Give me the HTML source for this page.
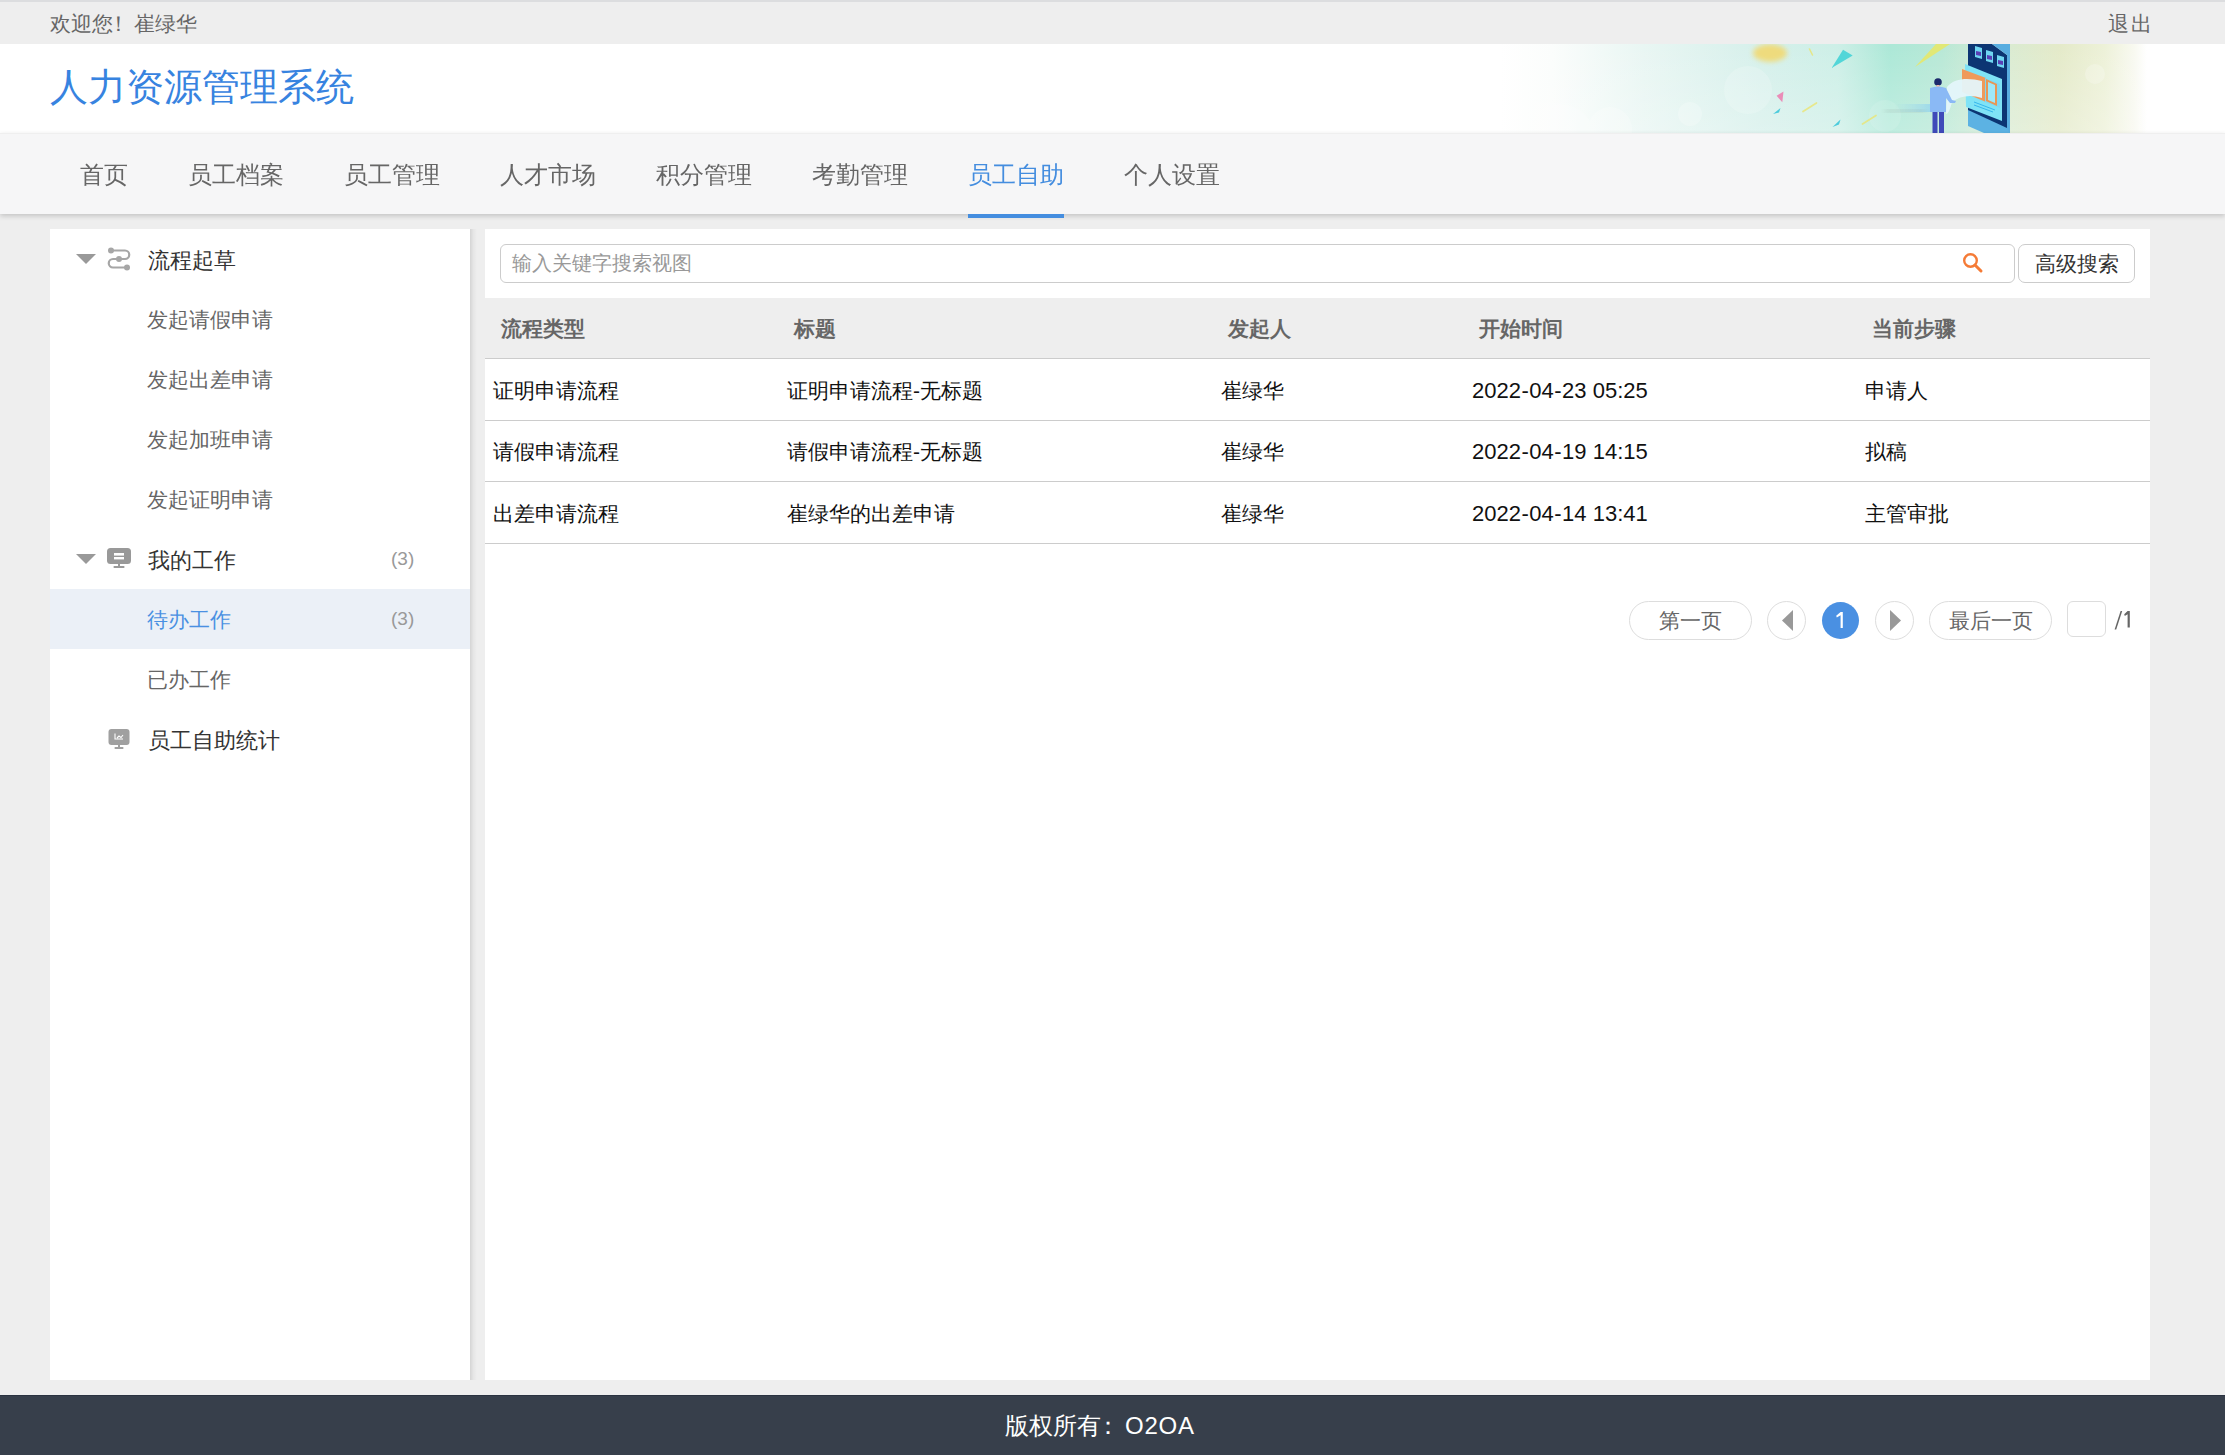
<!DOCTYPE html>
<html><head><meta charset="utf-8">
<style>
*{box-sizing:border-box;margin:0;padding:0}
html,body{width:2225px;height:1455px;overflow:hidden;background:#eeeeee;font-family:"Liberation Sans",sans-serif;position:relative}
.abs{position:absolute}
#topline{left:0;top:0;width:2225px;height:2px;background:#dcdddf}
#topbar{left:0;top:2px;width:2225px;height:42px;background:#eeeeee;color:#666;font-size:21px}
#welcome{left:50px;top:2px;line-height:40px;white-space:nowrap}
#logout{left:2108px;top:2px;line-height:40px;white-space:nowrap;letter-spacing:2px}
#header{left:0;top:44px;width:2225px;height:89px;background:#fff}
#title{left:50px;top:-1px;line-height:88px;font-size:38px;font-weight:500;color:#3783e0;white-space:nowrap}
#banner{left:1500px;top:0;width:650px;height:89px;overflow:hidden}
#nav{left:0;top:133px;width:2225px;height:81px;background:#f6f6f7;border-top:1px solid #efefef;box-shadow:0 2px 5px rgba(0,0,0,0.18)}
.nv{position:absolute;top:1px;height:79px;line-height:79px;font-size:24px;color:#666;white-space:nowrap}
.nv.on{color:#448ddf}
.nv.on:after{content:"";position:absolute;left:0;right:0;top:79px;height:4px;background:#448ddf}
#side{left:50px;top:229px;width:420px;height:1151px;background:#fff}
#sideshadow{left:470px;top:229px;width:7px;height:1151px;background:linear-gradient(to right,rgba(0,0,0,0.11),rgba(0,0,0,0.04) 45%,rgba(0,0,0,0))}
.row{position:absolute;left:0;width:420px;height:60px;line-height:60px;white-space:nowrap}
.row .t{position:absolute;left:97px;top:0}
.row.p .t{font-size:22px;color:#333;top:2px;left:98px}
.row.c .t{font-size:21px;color:#666;top:1px}
.row.sel{background:#ebf0f7}
.row.sel .t{color:#4a90e2}
.cnt{position:absolute;left:341px;top:0;font-size:19px;color:#999}
.tri{position:absolute;left:26px;width:0;height:0;border-left:10px solid transparent;border-right:10px solid transparent;border-top:10px solid #999}
#main{left:485px;top:229px;width:1665px;height:1151px;background:#fff}
#search{left:15px;top:15px;width:1515px;height:39px;border:1px solid #ccc;border-radius:6px}
#ph{position:absolute;left:11px;top:0;line-height:37px;font-size:20px;color:#999;white-space:nowrap}
#adv{left:1533px;top:15px;width:117px;height:39px;border:1px solid #ccc;border-radius:7px;font-size:21px;color:#333;line-height:37px;text-align:center;white-space:nowrap}
#thead{left:0;top:69px;width:1665px;height:61px;background:#eeeeee;border-bottom:1px solid #ccc}
.th{position:absolute;top:1px;line-height:60px;font-size:21px;font-weight:bold;color:#666;white-space:nowrap}
.tr{position:absolute;left:0;width:1665px;border-bottom:1px solid #ccc}
.td{position:absolute;top:1px;font-size:21px;color:#111;white-space:nowrap}
.td.d{font-size:22px}
.pill{position:absolute;top:372px;height:39px;border:1px solid #ddd;border-radius:20px;font-size:21px;color:#666;text-align:center;line-height:37px;white-space:nowrap}
#footer{left:0;top:1395px;width:2225px;height:60px;background:#373f4b;color:#fff;font-size:24px;line-height:60px;border-top:1px solid #2a3240}
#footer span{position:absolute;top:0;white-space:nowrap}
</style></head><body>
<div id="topline" class="abs"></div>
<div id="topbar" class="abs">
  <div id="welcome" class="abs">欢迎您<span style="position:relative;left:-5px">！</span>崔绿华</div>
  <div id="logout" class="abs">退出</div>
</div>
<div id="header" class="abs">
  <div id="title" class="abs">人力资源管理系统</div>
  <div id="banner" class="abs"><svg width="650" height="89" viewBox="0 0 650 89">
<defs>
<linearGradient id="bg" x1="0" y1="0" x2="1" y2="0">
<stop offset="0" stop-color="#ffffff"/>
<stop offset="0.08" stop-color="#fbfdfc"/>
<stop offset="0.22" stop-color="#e9f6f3"/>
<stop offset="0.40" stop-color="#d6f0eb"/>
<stop offset="0.52" stop-color="#cdefe7"/>
<stop offset="0.60" stop-color="#ace8d7"/>
<stop offset="0.68" stop-color="#b8e8d6"/>
<stop offset="0.77" stop-color="#d8ebd3"/>
<stop offset="0.86" stop-color="#e4eac9"/>
<stop offset="0.93" stop-color="#edf1d8"/>
<stop offset="0.975" stop-color="#f8f9f0"/>
<stop offset="0.995" stop-color="#ffffff"/>
<stop offset="1" stop-color="#ffffff"/>
</linearGradient>
<linearGradient id="vg" x1="0" y1="0" x2="0" y2="1">
<stop offset="0" stop-color="#ffffff" stop-opacity="0"/>
<stop offset="1" stop-color="#ffffff" stop-opacity="0.25"/>
</linearGradient>
<filter id="b2" x="-50%" y="-50%" width="200%" height="200%"><feGaussianBlur stdDeviation="2.5"/></filter>
<filter id="b1" x="-50%" y="-50%" width="200%" height="200%"><feGaussianBlur stdDeviation="0.6"/></filter>
<linearGradient id="streak" x1="0" y1="0" x2="1" y2="0">
<stop offset="0" stop-color="#9fd8ee" stop-opacity="0"/>
<stop offset="1" stop-color="#8fd3ee" stop-opacity="0.8"/>
</linearGradient>
</defs>
<rect width="650" height="89" fill="url(#bg)"/>
<rect width="650" height="89" fill="url(#vg)"/>
<g fill="#ffffff" opacity="0.22">
<circle cx="60" cy="95" r="35"/>
<circle cx="110" cy="85" r="22"/>
<circle cx="190" cy="70" r="12"/>
<circle cx="385" cy="72" r="16" opacity="0.5"/>
<circle cx="595" cy="30" r="10"/>
</g>
<ellipse cx="270" cy="9" rx="17" ry="9" fill="#f3d86a" filter="url(#b2)" opacity="0.85"/>
<polygon points="331.6,24 343,5.7 352.7,11.4" fill="#52d6d8"/>
<polygon points="276.6,51.8 283.5,47.4 282.3,58.3" fill="#ea8db8"/>
<polygon points="273,70 280.5,64 279,68.5" fill="#4ccbdc"/>
<polygon points="332.5,83 340.5,75.5 339,80.5" fill="#4ccbdc"/>
<path d="M303,67.5 L316.5,59" stroke="#ece46c" stroke-width="1.7" stroke-linecap="round" opacity="0.75"/>
<path d="M309.5,5 L312.5,11" stroke="#ece46c" stroke-width="1.6" stroke-linecap="round" opacity="0.75"/>
<path d="M362.5,80 L376,71.5" stroke="#ece46c" stroke-width="1.7" stroke-linecap="round" opacity="0.75"/>
<polygon points="415,23 450,0 436,0" fill="#e6e86c" opacity="0.9"/>
<circle cx="248" cy="46" r="24" fill="#ffffff" opacity="0.18"/>
<rect x="395" y="60" width="40" height="8" fill="url(#streak)" filter="url(#b1)"/>
<rect x="385" y="66" width="40" height="2" fill="#777" opacity="0.3" filter="url(#b2)"/>
<!-- device -->
<polygon points="468,0 492,0 507,11 507,86 468,68" fill="#0c3573"/>
<polygon points="492,0 510,0 510,89 507,89 507,11" fill="#58ade0"/>
<polygon points="468,66 507,84 510,89 484,89 468,82" fill="#5cb2e3"/>
<polygon points="475,2 482,4 482,15 475,13" fill="#6fd6f2"/><polygon points="476,7 481,8 481,12 476,11" fill="#5a3fb5"/>
<polygon points="486,6 493,8 493,19 486,17" fill="#6fd6f2"/><polygon points="487,11 492,12 492,16 487,15" fill="#5a3fb5"/>
<polygon points="497,11 504,13 504,24 497,22" fill="#6fd6f2"/><polygon points="498,16 503,17 503,21 498,20" fill="#5a3fb5"/>
<polygon points="465,20 502,35 502,77 466,63" fill="#7fe3f6"/>
<polygon points="462,25 486,34 486,58 462,48" fill="#ef9a5a"/>
<polygon points="485,34 500,40 500,64 485,58" fill="#7fd8f2"/>
<polygon points="486,35 497,40 497,62 486,57" fill="#e89654"/>
<polygon points="488,38 495,41 495,59 488,56" fill="#9fe8f8"/>
<path d="M474,58 L495,66 M474,61 L493,68" stroke="#36b6ec" stroke-width="1"/>
<!-- paper -->
<path d="M447,43 C455,33 470,34 482,37 L482,54 C470,50 460,52 452,58 C450,66 448,70 446,70 Z" fill="#e4f6fb" opacity="0.95"/>
<!-- person -->
<circle cx="438" cy="38" r="3.8" fill="#1c2a6b"/>
<rect x="436.5" y="41" width="3" height="3" fill="#f2b9a8"/>
<path d="M430,44 Q438,41 446,44 L452,56 L456,57 L455,59 L450,59 L446,54 L446,68 L430,68 Z" fill="#8ab9f5"/>
<rect x="432.5" y="68" width="5" height="21" fill="#3f4ab9"/>
<rect x="439" y="68" width="5" height="21" fill="#3f4ab9"/>
</svg>
</div>
</div>
<div id="nav" class="abs">
  <div class="nv" style="left:80px">首页</div>
  <div class="nv" style="left:188px">员工档案</div>
  <div class="nv" style="left:344px">员工管理</div>
  <div class="nv" style="left:500px">人才市场</div>
  <div class="nv" style="left:656px">积分管理</div>
  <div class="nv" style="left:812px">考勤管理</div>
  <div class="nv on" style="left:968px">员工自助</div>
  <div class="nv" style="left:1124px">个人设置</div>
</div>
<div id="side" class="abs">
  <div class="row p" style="top:0"><div class="tri" style="top:25px"></div><svg class="abs" style="left:57px;top:18px" width="24" height="24" viewBox="0 0 24 24"><circle cx="4" cy="3.5" r="3" fill="#a6a6a6"/><circle cx="12" cy="12" r="3" fill="#a6a6a6"/><circle cx="20" cy="20.5" r="3" fill="#a6a6a6"/><path d="M4 3.5H18A4.25 4.25 0 0 1 18 12H6A4.25 4.25 0 0 0 6 20.5H20" fill="none" stroke="#a6a6a6" stroke-width="2.2"/></svg><div class="t">流程起草</div></div>
  <div class="row c" style="top:60px"><div class="t">发起请假申请</div></div>
  <div class="row c" style="top:120px"><div class="t">发起出差申请</div></div>
  <div class="row c" style="top:180px"><div class="t">发起加班申请</div></div>
  <div class="row c" style="top:240px"><div class="t">发起证明申请</div></div>
  <div class="row p" style="top:300px"><div class="tri" style="top:25px"></div><svg class="abs" style="left:57px;top:19px" width="24" height="21" viewBox="0 0 24 21"><rect x="0" y="0" width="24" height="16" rx="3.5" fill="#999"/><rect x="7" y="5" width="10" height="2.6" fill="#fff"/><rect x="7" y="9" width="10" height="2.4" fill="#fff"/><rect x="11" y="16" width="2" height="2" fill="#999"/><rect x="6.5" y="18" width="11" height="2" rx="0.8" fill="#999"/></svg><div class="t">我的工作</div><div class="cnt">(3)</div></div>
  <div class="row c sel" style="top:360px"><div class="t">待办工作</div><div class="cnt">(3)</div></div>
  <div class="row c" style="top:420px"><div class="t">已办工作</div></div>
  <div class="row p" style="top:480px"><svg class="abs" style="left:58px;top:20px" width="22" height="21" viewBox="0 0 22 21"><rect x="0.5" y="0" width="21" height="16" rx="3" fill="#a0a0a0"/><path d="M7 4.5V10H15M9 9L11 7L13 8.5L15 6" fill="none" stroke="#fff" stroke-width="1.1"/><rect x="10" y="16" width="2" height="2" fill="#a0a0a0"/><rect x="6.5" y="18" width="9" height="2" rx="0.8" fill="#a0a0a0"/></svg><div class="t">员工自助统计</div></div>
</div>
<div id="sideshadow" class="abs"></div>
<div id="main" class="abs">
  <div id="search" class="abs"><div id="ph">输入关键字搜索视图</div><svg class="abs" style="left:1460px;top:6px" width="24" height="24" viewBox="0 0 24 24"><circle cx="9.5" cy="9.5" r="6.3" fill="none" stroke="#f57b36" stroke-width="2.4"/><path d="M14 14L20 20" stroke="#f57b36" stroke-width="3" stroke-linecap="round"/></svg></div>
  <div id="adv" class="abs">高级搜索</div>
  <div id="thead" class="abs">
    <div class="th" style="left:16px">流程类型</div>
    <div class="th" style="left:309px">标题</div>
    <div class="th" style="left:743px">发起人</div>
    <div class="th" style="left:994px">开始时间</div>
    <div class="th" style="left:1387px">当前步骤</div>
  </div>
  <div class="tr" style="top:130px;height:62px">
    <div class="td" style="left:8px;line-height:61px">证明申请流程</div>
    <div class="td" style="left:302px;line-height:61px">证明申请流程-无标题</div>
    <div class="td" style="left:736px;line-height:61px">崔绿华</div>
    <div class="td d" style="left:987px;line-height:61px">2022<span style="margin:0 0.5px">-</span>04<span style="margin:0 0.5px">-</span>23<span> </span>05<span>:</span>25</div>
    <div class="td" style="left:1380px;line-height:61px">申请人</div>
  </div>
  <div class="tr" style="top:192px;height:61px">
    <div class="td" style="left:8px;line-height:60px">请假申请流程</div>
    <div class="td" style="left:302px;line-height:60px">请假申请流程-无标题</div>
    <div class="td" style="left:736px;line-height:60px">崔绿华</div>
    <div class="td d" style="left:987px;line-height:60px">2022<span style="margin:0 0.5px">-</span>04<span style="margin:0 0.5px">-</span>19<span> </span>14<span>:</span>15</div>
    <div class="td" style="left:1380px;line-height:60px">拟稿</div>
  </div>
  <div class="tr" style="top:253px;height:62px">
    <div class="td" style="left:8px;line-height:61px">出差申请流程</div>
    <div class="td" style="left:302px;line-height:61px">崔绿华的出差申请</div>
    <div class="td" style="left:736px;line-height:61px">崔绿华</div>
    <div class="td d" style="left:987px;line-height:61px">2022<span style="margin:0 0.5px">-</span>04<span style="margin:0 0.5px">-</span>14<span> </span>13<span>:</span>41</div>
    <div class="td" style="left:1380px;line-height:61px">主管审批</div>
  </div>
  <div class="pill" style="left:1144px;width:123px">第一页</div>
  <div class="pill" style="left:1282px;width:39px;border-radius:50%"><svg class="abs" style="left:14px;top:8px" width="11" height="21" viewBox="0 0 11 21"><path d="M11 0V21L0 10.5Z" fill="#999"/></svg></div>
  <div class="pill" style="left:1337px;top:373px;width:37px;height:37px;border:none;background:#4a90e2;border-radius:50%"><svg class="abs" style="left:0;top:0" width="37" height="37" viewBox="0 0 37 37"><path d="M18.6 10H20.8V26H18.6V13.2L14.8 15.6L14.2 13.8Z" fill="#fff"/></svg></div>
  <div class="pill" style="left:1390px;width:39px;border-radius:50%"><svg class="abs" style="left:14px;top:8px" width="11" height="21" viewBox="0 0 11 21"><path d="M0 0V21L11 10.5Z" fill="#999"/></svg></div>
  <div class="pill" style="left:1444px;width:123px">最后一页</div>
  <div class="pill" style="left:1582px;width:39px;height:36px;border-radius:6px"></div>
  <svg class="abs" style="left:1629px;top:381px" width="20" height="21" viewBox="0 0 20 21"><path d="M0.6 19.5L6.6 1H8.2L2.2 19.5Z" fill="#666"/><path d="M13.6 1H15.8V17.5H13.6V4.2L10.8 6L10.2 4.2Z" fill="#666"/></svg>
</div>
<div id="footer" class="abs"><span style="left:1005px">版权所有</span><span style="left:1096px">：</span><span style="left:1125px;letter-spacing:0.8px">O2OA</span></div>
</body></html>
